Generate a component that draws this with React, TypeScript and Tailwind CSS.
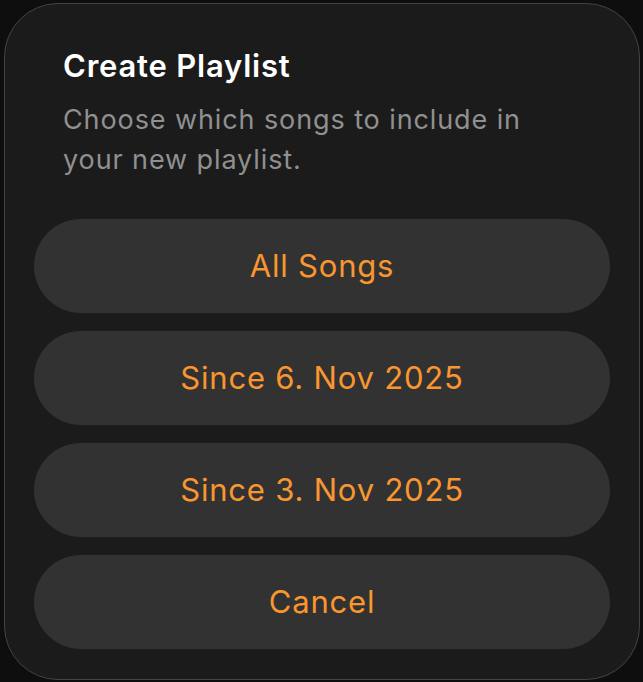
const OPTIONS = ['All Songs', 'Since 6. Nov 2025', 'Since 3. Nov 2025', 'Cancel']

export default function App() {
  return (
    <div
      className="w-[643px] h-[682px] bg-[#0e0e0e] pt-[3px] pl-[4px] pr-[3px] pb-[2px] overflow-hidden"
      style={{ fontFamily: 'Inter, "Noto Sans", sans-serif' }}
    >
      <div className="h-full rounded-[54px] border border-[#444444] bg-[#1b1b1b] px-[29px] pt-[44px] pb-[30px] flex flex-col">
        {/* Header */}
        <div className="px-[29px]">
          <h1 className="text-[31px] leading-[36px] font-semibold text-white tracking-[0.8px]">
            Create Playlist
          </h1>
          <p className="mt-[16px] max-w-[480px] text-[27px] leading-[40px] text-[#909090] tracking-[0.9px]">
            Choose which songs to include in your new playlist.
          </p>
        </div>

        {/* Options */}
        <div className="mt-[39px] flex flex-col gap-[18px]">
          {OPTIONS.map(label => (
            <button
              key={label}
              className="h-[94px] w-full rounded-full bg-[#323232] text-[#f9962f] text-[31px] tracking-[0.8px] font-normal"
            >
              {label}
            </button>
          ))}
        </div>
      </div>
    </div>
  )
}
